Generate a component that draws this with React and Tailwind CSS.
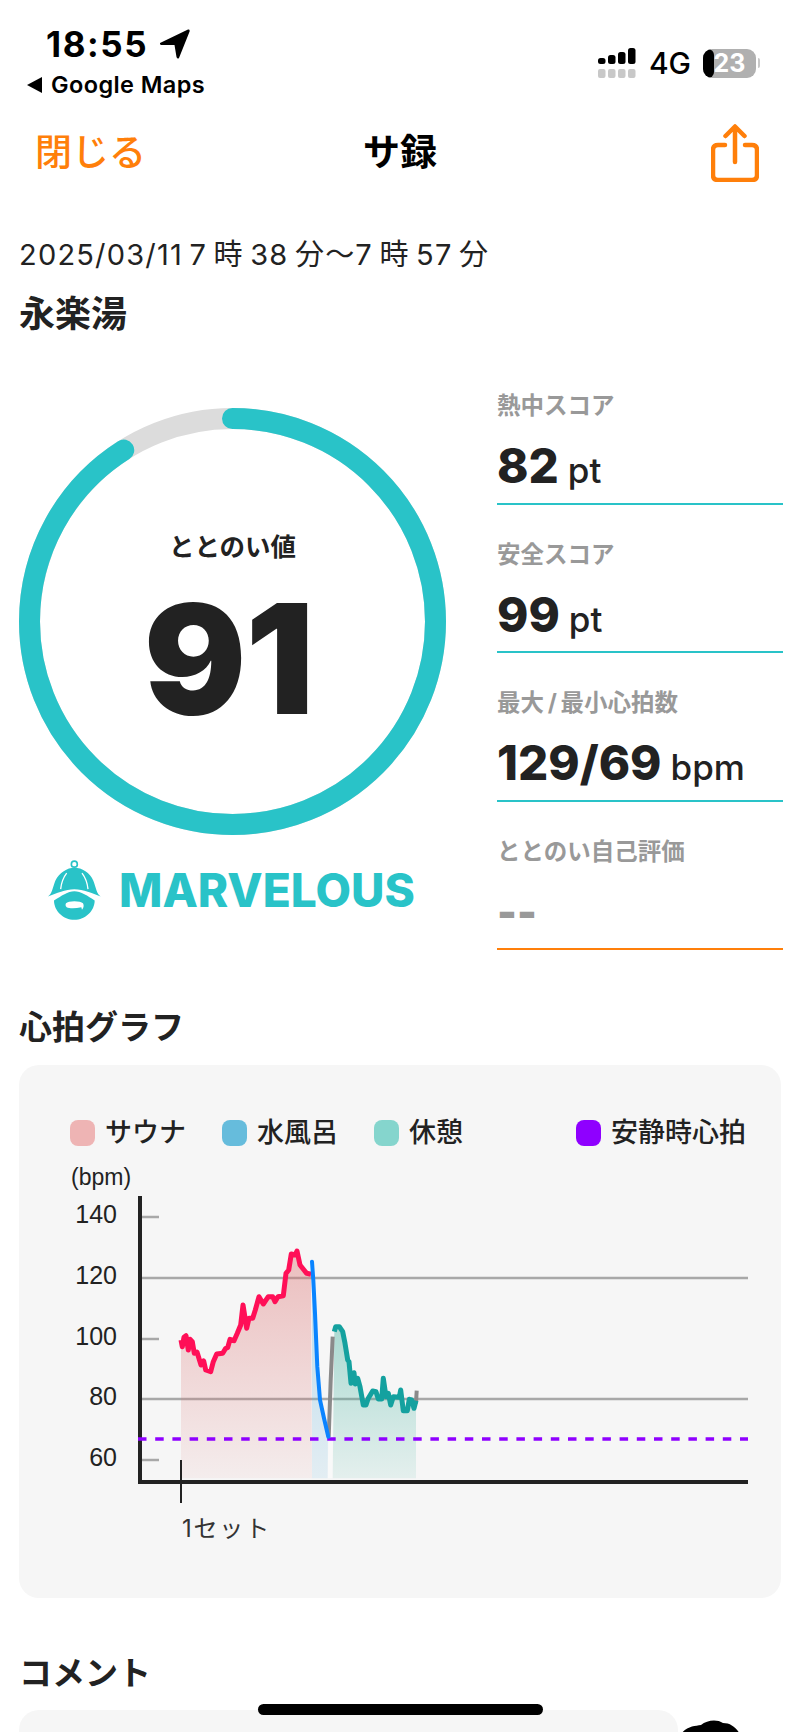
const JP = "font-['Inter','Noto_Sans_CJK_JP',sans-serif]";

// chart points were read off the reference at 3x, origin (50,1180)
const toPage = (pts) => pts.map(([x, y]) => `${(50 + x / 3).toFixed(1)},${(1180 + y / 3).toFixed(1)}`).join(' ');

const sauna = [[393,480],[397,500],[402,472],[408,467],[415,510],[420,478],[427,485],[433,520],[441,516],[453,555],[461,543],[467,570],[482,575],[490,545],[500,522],[518,520],[527,505],[533,503],[540,478],[552,482],[562,460],[572,435],[579,375],[590,445],[597,415],[608,415],[616,390],[627,350],[640,372],[655,350],[668,350],[675,365],[684,350],[700,347],[708,280],[716,270],[724,222],[735,225],[741,213],[750,255],[762,270],[770,280],[783,283]];
const bath = [[786,245],[790,300],[795,400],[802,560],[810,660],[822,715],[835,770]];
const rise = [[836,770],[842,600],[848,470]];
const rest = [[853,455],[857,440],[868,440],[878,455],[885,490],[893,540],[897,545],[903,610],[912,578],[916,612],[923,595],[930,620],[940,675],[948,675],[955,655],[968,633],[978,635],[985,657],[995,657],[1000,595],[1008,650],[1015,640],[1022,675],[1030,650],[1048,652],[1052,630],[1060,692],[1072,692],[1078,658],[1085,660],[1092,685],[1098,662]];
const tail = [[1098,670],[1100,632]];

const area = (pts, x0, x1) => toPage([[x0, 895], ...pts, [x1, 895]]);

function HeartChart() {
  return (
    <svg viewBox="19 1160 763 385" className="block w-[763px] h-[385px]">
      <defs>
        <linearGradient id="pink" x1="0" y1="0" x2="0" y2="1">
          <stop offset="0" stopColor="#dc7070" stopOpacity="0.42" />
          <stop offset="1" stopColor="#dc7070" stopOpacity="0.07" />
        </linearGradient>
        <linearGradient id="blue" x1="0" y1="0" x2="0" y2="1">
          <stop offset="0" stopColor="#56aedb" stopOpacity="0.4" />
          <stop offset="1" stopColor="#56aedb" stopOpacity="0.12" />
        </linearGradient>
        <linearGradient id="teal" x1="0" y1="0" x2="0" y2="1">
          <stop offset="0" stopColor="#43b39f" stopOpacity="0.42" />
          <stop offset="1" stopColor="#43b39f" stopOpacity="0.1" />
        </linearGradient>
      </defs>

      <text x="71" y="1185" fontSize="23" fill="#222" fontFamily="Liberation Sans">(bpm)</text>
      {[[140, 1217], [120, 1278], [100, 1339], [80, 1399], [60, 1460]].map(([v, y]) => (
        <g key={v}>
          <text x="117" y={y + 6} fontSize="25" textAnchor="end" fill="#222" fontFamily="Liberation Sans">{v}</text>
          <line x1="138" x2={v === 120 || v === 80 ? 748 : 159} y1={y} y2={y} stroke="#a8a8a8" strokeWidth="2.5" />
        </g>
      ))}

      <polygon points={area(sauna, 393, 786)} fill="url(#pink)" />
      <polygon points={area(bath, 786, 833)} fill="url(#blue)" />
      <polygon points={toPage([[833, 770], [848, 470], [848, 895], [833, 895]])} fill="#ffffff" opacity="0.35" />
      <polygon points={area(rest, 848, 1098)} fill="url(#teal)" />

      <line x1="140" x2="140" y1="1196" y2="1484" stroke="#222" strokeWidth="4" />
      <line x1="138" x2="748" y1="1482" y2="1482" stroke="#222" strokeWidth="4" />
      <line x1="181" x2="181" y1="1460" y2="1503" stroke="#222" strokeWidth="2" />
      <text x="182" y="1537" fontSize="24" letterSpacing="1.8" fill="#333" fontFamily="Inter, Noto Sans CJK JP, sans-serif">1セット</text>

      <line x1="138" x2="748" y1="1439" y2="1439" stroke="#8f00ff" strokeWidth="3.5" strokeDasharray="8.5 8.7" />
      <polyline points={toPage(sauna)} fill="none" stroke="#ff0f57" strokeWidth="5" strokeLinejoin="round" />
      <polyline points={toPage(rise)} fill="none" stroke="#8a8a8a" strokeWidth="4" />
      <polyline points={toPage(tail)} fill="none" stroke="#8a8a8a" strokeWidth="4" />
      <polyline points={toPage(rest)} fill="none" stroke="#14a19f" strokeWidth="5" strokeLinejoin="round" />
      <polyline points={toPage(bath)} fill="none" stroke="#0a84ff" strokeWidth="4" strokeLinecap="round" />
    </svg>
  );
}

function Legend({ color, label, className }) {
  return (
    <div className={`flex items-center gap-[10px] ${className || ''}`}>
      <span className={`w-[25px] h-[26px] rounded-[8px] ${color}`} />
      <span className="text-[27px] leading-[26px] font-medium text-[#222]">{label}</span>
    </div>
  );
}

function Stat({ label, value, unit, line }) {
  return (
    <div className={`h-[148.5px] border-b-2 ${line} flex flex-col`}>
      <div className="mt-[38px] h-[24px] text-[23.5px] leading-[24px] font-bold text-[#999] whitespace-pre">{label}</div>
      <div className="mt-[23px] h-[50px] flex items-baseline gap-[9px] leading-[50px] text-[#222]">
        <span className="text-[47.5px] font-extrabold">{value}</span>
        {unit && <span className="text-[35px] font-medium">{unit}</span>}
      </div>
    </div>
  );
}

function Logo() {
  return (
    <svg viewBox="55 60 165 185" className="w-[55px] h-[62px]">
      <circle cx="137" cy="75" r="9" fill="none" stroke="#29c3c8" strokeWidth="5" />
      <path d="M58 172 C70 165 72 145 80 125 C92 100 116 86 137 86 C160 86 184 100 194 125 C202 145 204 165 216 172 C190 162 165 150 137 150 C110 150 84 162 58 172Z" fill="#29c3c8" />
      <path d="M114 102 C104 115 98 130 96 150 M160 102 C170 115 176 130 178 150" fill="none" stroke="#fff" strokeWidth="4" />
      <path d="M76 184 C98 170 118 156 137 156 C156 156 178 170 198 184 C198 215 170 242 137 242 C104 242 76 215 76 184Z" fill="#29c3c8" />
      <path d="M112 192 C118 184 156 184 163 192 C166 198 166 204 160 212 L158 204 C140 208 122 208 114 204 C110 200 110 196 112 192Z" fill="#fff" />
    </svg>
  );
}

export default function App() {
  return (
    <div className={`relative w-[800px] h-[1732px] overflow-hidden bg-white ${JP}`}>
      {/* status bar */}
      <div className="h-[110px] flex justify-between items-start">
        <div>
          <div className="ml-[46px] mt-[26px] h-[36px] flex items-center gap-[12px] text-[35px] leading-[36px] font-bold tracking-[1.6px] text-black">
            18:55
            <svg viewBox="0 0 30 30" className="w-[30px] h-[30px]">
              <path d="M0 14 L28 0.5 Q30 0 29.6 2.5 L19 29 Q17.5 30.5 16.5 28 L14.5 16 L1 16 Q-1 15 0 14Z" fill="#000" />
            </svg>
          </div>
          <div className="ml-[27px] mt-[10px] flex items-center gap-[9px] text-[23.5px] leading-[26px] font-semibold tracking-[0.4px] text-black">
            <span className="w-0 h-0 border-y-[8px] border-y-transparent border-r-[15px] border-r-black" />
            Google Maps
          </div>
        </div>
        <div className="mt-[48px] mr-[40px] flex items-center gap-[10px]">
          <svg viewBox="0 0 41 30" className="w-[41px] h-[30px]">
            {[[0, 10], [10, 7], [20, 4], [30, 0]].map(([x, y]) => (
              <g key={x}>
                <rect x={x} y={y} width="7.5" height={16 - y} rx="2.5" fill="#000" />
                <rect x={x} y="21" width="7.5" height="9" rx="2" fill="#c8c8c8" />
              </g>
            ))}
          </svg>
          <span className="text-[30px] leading-[30px] font-medium text-black">4G</span>
          <div className="relative w-[53px] h-[29px] rounded-[9px] bg-[#b0b0b0] overflow-hidden flex items-center justify-center ml-[2px]">
            <span className="absolute left-0 top-0 bottom-0 w-[11px] bg-black rounded-r-[6px]" />
            <span className="relative text-[25px] leading-[29px] font-bold text-white">23</span>
          </div>
          <span className="-ml-[8px] w-[2px] h-[10px] rounded-r-full bg-[#c8c8c8]" />
        </div>
      </div>

      {/* nav */}
      <div className="mt-[14px] h-[58px] px-[35px] grid grid-cols-3 items-center">
        <span className="text-[37px] leading-[40px] font-medium text-[#ff7f0a]">閉じる</span>
        <span className="text-center text-[37px] leading-[40px] font-bold text-black">サ録</span>
        <svg viewBox="0 0 48 58" fill="none" stroke="#ff7f0a" strokeWidth="4.5" className="justify-self-end w-[48px] h-[58px] mr-[6px]">
          <path d="M14 21 H7 Q2 21 2 26 V51 Q2 56 7 56 H41 Q46 56 46 51 V26 Q46 21 41 21 H34" strokeLinecap="round" />
          <path d="M24 38 V3 M14.5 12 L24 2.5 L33.5 12" strokeLinecap="round" strokeLinejoin="round" />
        </svg>
      </div>

      {/* title */}
      <div className="ml-[19px] mt-[55px] text-[29px] leading-[36px] tracking-[1.2px] text-[#222] whitespace-pre">{'2025/03/11\u20097\u2009時\u200938\u2009分〜7\u2009時\u200957\u2009分'}</div>
      <div className="ml-[19px] mt-[21px] text-[36px] leading-[40px] font-bold text-[#222]">永楽湯</div>

      {/* score + stats */}
      <div className="mt-[74px] ml-[19px] flex">
        <div className="w-[427px] shrink-0">
          <div className="relative w-[427px] h-[427px]">
            <svg viewBox="0 0 427 427" className="w-[427px] h-[427px] -rotate-90">
              <circle cx="213.5" cy="213.5" r="203" fill="none" stroke="#dcdcdc" strokeWidth="21" />
              <circle cx="213.5" cy="213.5" r="203" fill="none" stroke="#29c3c8" strokeWidth="21" strokeLinecap="round" pathLength="100" strokeDasharray="91 100" />
            </svg>
            <div className="absolute inset-0 flex flex-col items-center">
              <div className="mt-[125px] text-[25.5px] leading-[28px] font-bold text-[#222]">ととのい値</div>
              <div className="mt-[25px] mr-[8px] text-[152px] leading-[147px] font-black text-[#222] tracking-[-1px]">91</div>
            </div>
          </div>
          <div className="mt-[24px] ml-[28px] flex items-center gap-[17px]">
            <Logo />
            <span className="text-[46px] leading-[50px] font-extrabold text-[#29c3c8]">MARVELOUS</span>
          </div>
        </div>
        <div className="ml-[51px] -mt-[52px] w-[286px]">
          <Stat label="熱中スコア" value="82" unit="pt" line="border-[#29c3c8]" />
          <Stat label="安全スコア" value="99" unit="pt" line="border-[#29c3c8]" />
          <Stat label={'最大\u2009/\u2009最小心拍数'} value="129/69" unit="bpm" line="border-[#29c3c8]" />
          <div className="h-[148.5px] border-b-2 border-[#ff7f0a] flex flex-col">
            <div className="mt-[38px] h-[24px] text-[23.5px] leading-[24px] font-bold text-[#999]">ととのい自己評価</div>
            <div className="mt-[23px] h-[50px] text-[42px] leading-[50px] font-black text-[#999]">--</div>
          </div>
        </div>
      </div>

      {/* graph */}
      <div className="ml-[19px] mt-[58px] text-[33px] leading-[38px] font-bold text-[#222]">心拍グラフ</div>
      <div className="mx-[19px] mt-[19px] h-[533px] rounded-[20px] bg-[#f6f6f6] overflow-hidden">
        <div className="pt-[55px] pl-[51px] pr-[35px] flex items-center">
          <Legend color="bg-[#eeb4b4]" label="サウナ" className="mr-[36px]" />
          <Legend color="bg-[#66bcdc]" label="水風呂" className="mr-[36px]" />
          <Legend color="bg-[#85d5cd]" label="休憩" />
          <Legend color="bg-[#8f00ff]" label="安静時心拍" className="ml-auto" />
        </div>
        <div className="mt-[14px]">
          <HeartChart />
        </div>
      </div>

      {/* comment */}
      <div className="ml-[19px] mt-[56px] text-[33px] leading-[38px] font-bold text-[#222]">コメント</div>
      <div className="mt-[18px] ml-[19px] flex">
        <div className="w-[659px] h-[60px] rounded-t-[20px] bg-[#f6f6f6]" />
        <svg viewBox="0 0 62 40" className="ml-[3px] mt-[10px] w-[62px] h-[40px]">
          <path d="M0 14 C6 6 14 6 20 5 C26 0 36 -1 42 3 C50 3 56 8 60 16 L62 40 H0Z" fill="#000" />
        </svg>
      </div>

      {/* home indicator */}
      <div className="absolute left-[258px] top-[1704px] w-[285px] h-[11px] rounded-full bg-black" />
    </div>
  );
}
